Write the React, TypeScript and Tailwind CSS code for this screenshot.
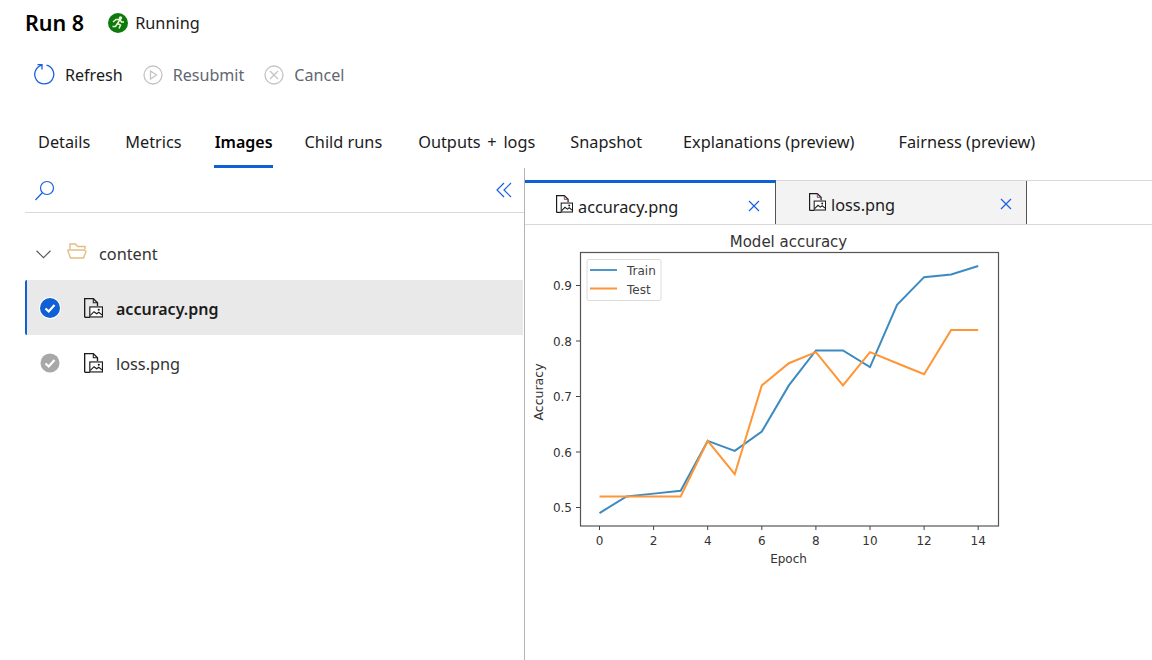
import { ReactNode } from "react";

const tabs = [
  { label: "Details", left: "ml-[38px] pt-[2px]" },
  { label: "Metrics", left: "ml-[35px] pt-[2px]" },
  { label: "Images", left: "ml-[32px] pl-px text-[16px]", active: true },
  { label: "Child runs", left: "ml-[32px] pt-[2px]" },
  { label: "Outputs + logs", left: "ml-[36px] pt-[2px] [word-spacing:2.500px]" },
  { label: "Snapshot", left: "ml-[35px] pt-[2px]" },
  { label: "Explanations (preview)", left: "ml-[41px] pt-[2px]" },
  { label: "Fairness (preview)", left: "ml-[44px] pt-[2px]" },
];

const train = [0.49, 0.52, 0.525, 0.53, 0.62, 0.602, 0.637, 0.72, 0.783, 0.783, 0.753, 0.865, 0.915, 0.92, 0.935];
const test = [0.52, 0.52, 0.52, 0.52, 0.62, 0.56, 0.72, 0.76, 0.78, 0.72, 0.78, 0.76, 0.74, 0.82, 0.82];

// chart svg starts at x=525, y=225
const px = (e: number) => 74.5 + e * 27.05;
const py = (v: number) => 282.5 - (v - 0.5) * 555;
const line = (d: number[]) => d.map((v, i) => `${px(i)},${py(v)}`).join(" ");

function FileImageIcon({ small = false, className = "" }: { small?: boolean; className?: string }) {
  return (
    <svg viewBox="1 0.5 18 19" width={small ? 17 : 19} height={small ? 18 : 20} fill="none" className={`shrink-0 ${className}`}>
      <path d="M1.600 18.900V1.100h8.200l4 4v3" stroke="#1b1b1b" strokeWidth="1.300" />
      <path d="M9.800 1.100v4h4" stroke={small ? "#8a3a6e" : "#1b1b1b"} strokeWidth="1" />
      <path d="M1.600 18.900h5" stroke="#1b1b1b" strokeWidth="1.300" />
      <rect x="6.500" y="9" width="12" height="9.500" fill="#fff" stroke="#1b1b1b" strokeWidth="1.100" />
      <path d="M7 17l3.500-3.500 2.500 2 2-1.500 3 2.500" stroke="#1b1b1b" strokeWidth="1.100" />
      <circle cx="15" cy="11.600" r="1" fill="#1b1b1b" />
    </svg>
  );
}

function CheckCircle({ color, ring }: { color: string; ring?: boolean }) {
  return (
    <svg viewBox="0 0 22 22" width="22" height="22" className="shrink-0">
      {ring && <circle cx="11" cy="11" r="11" fill="#fff" />}
      <circle cx="11" cy="11" r={ring ? 10 : 9.5} fill={color} />
      <path d="M6.500 11.500l3.200 3 5.800-6.500" fill="none" stroke="#fff" strokeWidth="2.200" />
    </svg>
  );
}

function ToolButton({ icon, label, className }: { icon: ReactNode; label: string; className: string }) {
  return (
    <div className={`flex items-center gap-[10px] ${className}`}>
      {icon}
      <span>{label}</span>
    </div>
  );
}

function CloseIcon() {
  return (
    <svg viewBox="0 0 12 12" width="12" height="12" fill="none" stroke="#1a5fe0" strokeWidth="1.200" className="shrink-0">
      <path d="M1 1l10 10M11 1L1 11" />
    </svg>
  );
}

function AccuracyChart() {
  const xTicks = [0, 2, 4, 6, 8, 10, 12, 14];
  const yTicks = [0.5, 0.6, 0.7, 0.8, 0.9];
  return (
    <svg width="627" height="435" viewBox="0 0 627 435" className="block font-['DejaVu_Sans',sans-serif]">
      <text x="263.500" y="22" textAnchor="middle" fontSize="15" fill="#333">Model accuracy</text>
      <rect x="55.500" y="27.500" width="418" height="273.500" fill="none" stroke="#555" strokeWidth="1.200" />
      {xTicks.map((t) => (
        <g key={t}>
          <line x1={px(t)} x2={px(t)} y1="301" y2="305" stroke="#444" />
          <text x={px(t)} y="320" textAnchor="middle" fontSize="12" fill="#333">{t}</text>
        </g>
      ))}
      {yTicks.map((t) => (
        <g key={t}>
          <line x1="51" x2="55" y1={py(t)} y2={py(t)} stroke="#444" />
          <text x="47" y={py(t) + 4.5} textAnchor="end" fontSize="12" fill="#333">{t.toFixed(1)}</text>
        </g>
      ))}
      <text x="263.500" y="338" textAnchor="middle" fontSize="12" fill="#333">Epoch</text>
      <text x="0" y="0" transform="translate(18 167) rotate(-90)" textAnchor="middle" fontSize="12.500" fill="#333">Accuracy</text>
      <polyline points={line(train)} fill="none" stroke="#3b8bc2" strokeWidth="2" />
      <polyline points={line(test)} fill="none" stroke="#ff9535" strokeWidth="2" />
      <rect x="62" y="34.500" width="74" height="41" rx="2" fill="#fff" stroke="#dcdcdc" />
      <line x1="65" x2="92" y1="45" y2="45" stroke="#4f95c6" strokeWidth="2" />
      <line x1="65" x2="92" y1="63.500" y2="63.500" stroke="#ff9535" strokeWidth="2" />
      <text x="102" y="50" fontSize="12" fill="#444">Train</text>
      <text x="102" y="69" fontSize="12" fill="#444">Test</text>
    </svg>
  );
}

export default function App() {
  return (
    <div className="flex h-[660px] w-[1152px] flex-col overflow-hidden bg-white font-['Noto_Sans',sans-serif] text-[#1b1b1b]">
      <div className="flex h-[46px] items-center pl-[25px]">
        <h1 className="text-[21.500px] leading-none font-semibold text-black">Run 8</h1>
        <svg viewBox="0 0 20 20" width="20" height="20" className="ml-[24px]">
          <circle cx="10" cy="10" r="10" fill="#0e7a0d" />
          <circle cx="12.500" cy="5" r="1.700" fill="#eef8d8" />
          <path d="M5 9l3-2.500h4l-2.500 4 3 1.500-1.500 3.500M9.500 10.500L7.500 13.500H4.500M12 7l1.500 2h2.500" fill="none" stroke="#eef8d8" strokeWidth="1.500" />
        </svg>
        <span className="ml-[7px] text-[16.300px]">Running</span>
      </div>

      <div className="mt-[4px] flex h-[50px] items-center pl-[34px] text-[16.100px]">
        <ToolButton
          className="text-[#1b1b1b]"
          label="Refresh"
          icon={
            <svg viewBox="0 0 21 21" width="21" height="21" fill="none" stroke="#1a5fe0" strokeWidth="1.300">
              <path d="M8 1.200A9.500 9.500 0 1 0 12.500 1.200" />
              <path d="M3.500 .700H8V5.500" />
            </svg>
          }
        />
        <ToolButton
          className="ml-[20px] text-[#5f6672]"
          label="Resubmit"
          icon={
            <svg viewBox="0 0 20 20" width="20" height="20" fill="none" stroke="#c4c4c4" strokeWidth="1.300">
              <circle cx="10" cy="10" r="9" />
              <path d="M7.500 6l6 4-6 4z" />
            </svg>
          }
        />
        <ToolButton
          className="ml-[20px] text-[#5f6672]"
          label="Cancel"
          icon={
            <svg viewBox="0 0 20 20" width="20" height="20" fill="none" stroke="#c4c4c4" strokeWidth="1.300">
              <circle cx="10" cy="10" r="9" />
              <path d="M6 6l8 8M14 6l-8 8" />
            </svg>
          }
        />
      </div>

      <div className="mt-[18px] flex h-[50px] items-stretch text-[16.300px]">
        {tabs.map((t) => (
          <div
            key={t.label}
            className={`flex items-center border-b-[3px] whitespace-nowrap ${t.left} ${t.active ? "border-[#0f5fd7] font-semibold text-black" : "border-transparent"}`}
          >
            {t.label}
          </div>
        ))}
      </div>

      <div className="flex min-h-0 flex-1">
        <div className="w-[525px] shrink-0 border-r border-[#b4b4b4] pl-[25px]">
          <div className="flex h-[45px] items-center justify-between border-b border-[#d8d8d8] pr-[12px] pl-[9px]">
            <svg viewBox="0 0 21 21" width="21" height="21" fill="none" stroke="#1a5fe0" strokeWidth="1.200">
              <circle cx="13" cy="8" r="6.500" />
              <path d="M8.500 12.500L1.500 20" />
            </svg>
            <svg viewBox="0 0 16 16" width="16" height="16" fill="none" stroke="#1a5fe0" strokeWidth="1.200">
              <path d="M8 1L1 8l7 7M15 1L8 8l7 7" />
            </svg>
          </div>

          <div className="flex h-[67px] items-center pt-[15px] text-[#333]">
            <svg viewBox="0 0 14 8" width="15" height="9" fill="none" stroke="#555" strokeWidth="1" className="ml-[11px]">
              <path d="M.5.500L7 7l6.500-6.500" />
            </svg>
            <svg viewBox="0 0 20 16" width="20" height="16" fill="none" stroke="#e2bd85" strokeWidth="1.400" className="ml-[16px] -translate-y-[3px]">
              <path d="M3 6V1h5.500l2 2.500H18V6M1 7h16.500L19 8.500 16.500 15H3.500L1 8z" />
            </svg>
            <span className="ml-[12px] text-[16.300px]">content</span>
          </div>

          <div className="flex h-[55px] w-[498px] items-center rounded-l-[2px] border-l-2 border-[#0f5fd7] bg-[#e9e9e9] pl-[12px]">
            <CheckCircle color="#0f5fd7" ring />
            <FileImageIcon className="ml-[23px]" />
            <span className="ml-[13px] pt-[3px] text-[16px] font-semibold">accuracy.png</span>
          </div>

          <div className="flex h-[55px] items-center pl-[14px] text-[#333]">
            <CheckCircle color="#a8a8a8" />
            <FileImageIcon className="ml-[23px]" />
            <span className="ml-[13px] pt-[3px] text-[16.300px]">loss.png</span>
          </div>
        </div>

        <div className="min-w-0 flex-1 pt-[12px]">
          <div className="flex h-[45px] border-y border-[#d8d8d8]">
            <div className="-mt-px flex w-[251px] items-center border-t-[3px] border-r border-[#555] border-t-[#0f5fd7] pt-[5px] pr-[15px] pl-[31px] text-[16.300px]">
              <FileImageIcon small className="-translate-y-[2px]" />
              <span className="ml-[5px] flex-1 pt-[2px]">accuracy.png</span>
              <CloseIcon />
            </div>
            <div className="flex w-[251px] items-center border-r border-[#555] bg-[#f3f3f3] pt-[2px] pr-[14px] pl-[33px] text-[16.300px]">
              <FileImageIcon small className="-translate-y-[2px]" />
              <span className="ml-[5px] flex-1 pt-[3px]">loss.png</span>
              <CloseIcon />
            </div>
          </div>
          <AccuracyChart />
        </div>
      </div>
    </div>
  );
}
